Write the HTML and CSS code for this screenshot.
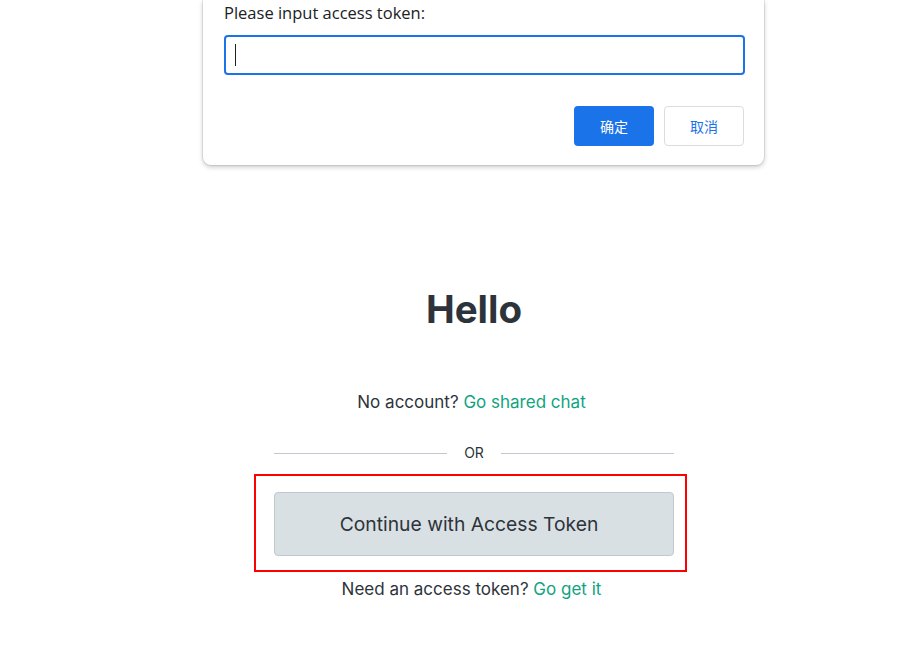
FILE: index.html
```html
<!DOCTYPE html>
<html lang="en">
<head>
<meta charset="utf-8">
<title>Hello</title>
<link rel="stylesheet" href="styles.css">
</head>
<body>
<div class="dialog">
  <div class="dialog-label">Please input access token:</div>
  <div class="dialog-input"><span class="caret"></span></div>
  <div class="dialog-actions">
    <button class="btn btn-primary">确定</button>
    <button class="btn btn-secondary">取消</button>
  </div>
</div>
<main class="main">
  <h1 class="title">Hello</h1>
  <p class="line">No account? <a class="link">Go shared chat</a></p>
  <div class="divider"><span class="rule"></span><span class="or">OR</span><span class="rule"></span></div>
  <div class="token-wrap">
    <button class="token-btn">Continue with Access Token</button>
  </div>
  <p class="line line-need">Need an access token? <a class="link">Go get it</a></p>
</main>
</body>
</html>
```
FILE: styles.css
```css
html, body {
  margin: 0;
  padding: 0;
  background: #ffffff;
}
body {
  width: 922px;
  height: 671px;
  overflow: hidden;
  font-family: Inter, "Noto Sans", sans-serif;
  color: #2d333a;
  position: relative;
}
.dialog {
  position: absolute;
  left: 203px;
  top: 0;
  width: 561px;
  box-sizing: border-box;
  padding: 3px 20px 19px 21px;
  background: #fff;
  border-radius: 0 0 8px 8px;
  box-shadow: 0 0 0 1px rgba(0,0,0,0.08), 0 2px 5px rgba(0,0,0,0.22);
  font-family: "Open Sans", "Noto Sans", "Noto Sans CJK SC", sans-serif;
}
.dialog-label {
  font-size: 16.5px;
  line-height: 20px;
  color: #202124;
}
.dialog-input {
  margin-top: 12px;
  height: 40px;
  width: 521px;
  box-sizing: border-box;
  border: 2px solid #1a73e8;
  border-radius: 4px;
  display: flex;
  align-items: center;
  padding-left: 9px;
}
.caret {
  width: 1px;
  height: 22px;
  background: #202124;
}
.dialog-actions {
  margin-top: 31px;
  display: flex;
  justify-content: flex-end;
  gap: 10px;
}
.btn {
  width: 80px;
  height: 40px;
  border-radius: 4px;
  font-family: "Noto Sans CJK SC", sans-serif;
  font-size: 14px;
  cursor: pointer;
}
.btn-primary {
  background: #1a73e8;
  color: #fff;
  border: none;
}
.btn-secondary {
  background: #fff;
  color: #1a73e8;
  border: 1px solid #dadce0;
}
.main {
  margin-left: 274px;
  width: 400px;
  padding-top: 287px;
  display: flex;
  flex-direction: column;
  align-items: center;
}
.title {
  margin: 0;
  font-size: 38.5px;
  line-height: 44px;
  font-weight: 700;
  color: #2d333a;
}
.line {
  margin: 59px 0 0;
  padding-right: 5px;
  font-size: 17px;
  line-height: 24px;
  color: #2d333a;
}
.link {
  color: #10a37f;
  text-decoration: none;
}
.divider {
  margin-top: 29px;
  width: 100%;
  display: flex;
  align-items: center;
  height: 20px;
}
.rule {
  flex: 1;
  height: 1px;
  background: #c2c8d0;
}
.or {
  padding: 0 17px;
  font-size: 14px;
  line-height: 20px;
}
.token-wrap {
  margin-top: 29px;
  width: 100%;
  position: relative;
}
.token-wrap::after {
  content: "";
  position: absolute;
  left: -20px;
  right: -13px;
  top: -18px;
  bottom: -16px;
  border: 2px solid #ff0000;
  pointer-events: none;
}
.token-btn {
  width: 100%;
  height: 64px;
  box-sizing: border-box;
  padding: 0 10px 0 0;
  background: #d9e0e3;
  border: 1px solid #c2c8d0;
  border-radius: 4px;
  font-family: Inter, "Noto Sans", sans-serif;
  font-size: 19.3px;
  color: #2d333a;
}
.line-need {
  margin-top: 21px;
}
```
